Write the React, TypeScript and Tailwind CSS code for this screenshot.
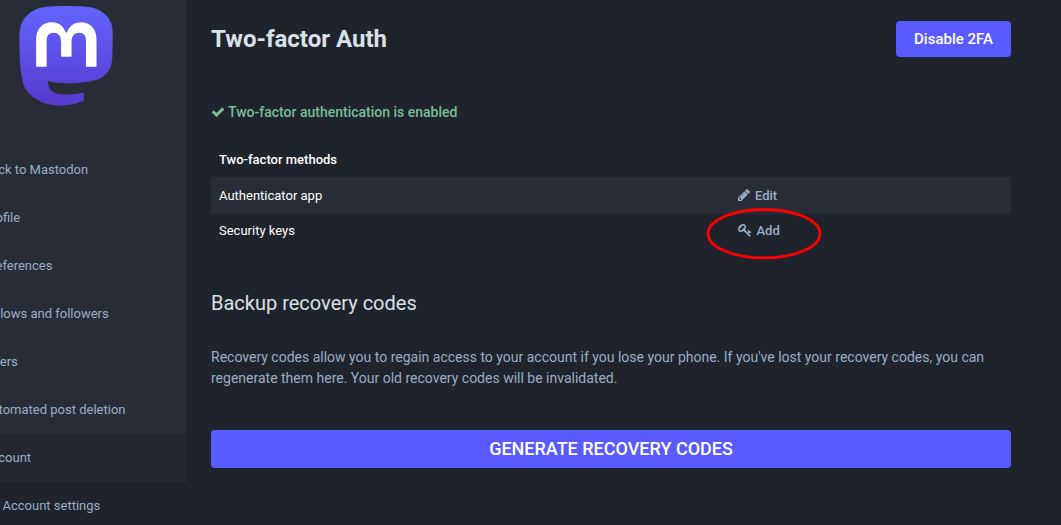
import React from "react";

type NavItem = { label: string; shift: string; row?: string };

const navItems: NavItem[] = [
  { label: "Back to Mastodon", shift: "-ml-[17px]" },
  { label: "Profile", shift: "-ml-[17px]" },
  { label: "Preferences", shift: "-ml-[17px]" },
  { label: "Follows and followers", shift: "-ml-[17.5px]" },
  { label: "Filters", shift: "-ml-[18px]" },
  { label: "Automated post deletion", shift: "-ml-[17px]" },
  { label: "Account", shift: "-ml-[17px]", row: "bg-[#242731]" },
  { label: "Account settings", shift: "ml-[2.5px]", row: "bg-[#1f232b]" },
];

function Logo() {
  return (
    <svg className="ml-[14px] mt-[6px] h-[105px] w-[104px] shrink-0" viewBox="0 0 79 79" preserveAspectRatio="none">
      <defs>
        <linearGradient id="logo" x1="0" y1="0" x2="0" y2="1">
          <stop stopColor="#6364ff" />
          <stop offset="1" stopColor="#563acc" />
        </linearGradient>
      </defs>
      <path
        fill="url(#logo)"
        d="M74.7 16.6c.6 6 .1 15.7.1 17.3 0 .5-.1 4.8-.1 5.3-.7 11.5-8 16-15.6 17.5-.1 0-.2 0-.3 0-4.9 1-10 1.2-14.9 1.4-1.2 0-2.4 0-3.6 0-4.8 0-9.7-.6-14.4-1.7 0 0-.3-.1-.3.1.1 1.6.4 3.1 1 4.5.6 1.7 2.9 5.7 11.4 5.7 5 0 9.9-.6 14.8-1.7.2 0 .3.1.3.2v5.6c0 .1 0 .2-.1.2-1.6 1.1-3.7 1.7-5.6 2.3-.8.3-1.6.5-2.4.7-7.5 1.7-15.4 1.3-22.7-1.2-6.8-2.4-13.8-8.2-15.5-15.2-.9-3.8-1.6-7.6-1.9-11.5-.6-5.8-.6-11.7-.8-17.5C3.9 24.5 4 20 4.9 16 6.7 7.9 14.1 2.2 22.3 1c1.4-.2 4.1-1 16.5-1h.1C51.4 0 56.7.8 58.1 1c8.4 1.2 15.5 7.5 16.6 15.6Z"
      />
      <path
        fill="#fff"
        transform="translate(-0.3 0.4)"
        d="M63 45.3v-20c0-4.1-1-7.3-3.2-9.7-2.1-2.4-5-3.7-8.5-3.7-4.1 0-7.2 1.6-9.3 4.7l-2 3.3-2-3.3c-2-3.1-5.1-4.7-9.2-4.7-3.5 0-6.4 1.3-8.6 3.7-2.1 2.4-3.1 5.6-3.1 9.7v20h8V25.9c0-4.1 1.7-6.2 5.2-6.2 3.8 0 5.8 2.5 5.8 7.4V37.7H44V27.1c0-4.9 1.9-7.4 5.8-7.4 3.5 0 5.2 2.1 5.2 6.2V45.3h8Z"
      />
    </svg>
  );
}

function Glyph({ d, className }: { d: string; className: string }) {
  return (
    <svg className={`shrink-0 ${className}`} viewBox="0 0 1792 1792" fill="currentColor">
      <path d={d} />
    </svg>
  );
}

const CHECK =
  "M1671 566q0 40-28 68l-724 724-136 136q-28 28-68 28t-68-28l-136-136-362-362q-28-28-28-68t28-68l136-136q28-28 68-28t68 28l294 295 656-657q28-28 68-28t68 28l136 136q28 28 28 68z";
const PENCIL =
  "M491 1536l91-91-235-235-91 91v107h128v128h107zm523-928q0-22-22-22-10 0-17 7l-542 542q-7 7-7 17 0 22 22 22 10 0 17-7l542-542q7-7 7-17zm-54-192l416 416-832 832h-416v-416zm683 96q0 53-37 90l-166 166-416-416 166-165q36-38 90-38 53 0 91 38l235 234q37 39 37 91z";
const KEY =
  "M832 512q0-80-56-136t-136-56-136 56-56 136q0 42 19 83-41-19-83-19-80 0-136 56t-56 136 56 136 136 56 136-56 56-136q0-42-19-83 41 19 83 19 80 0 136-56t56-136zm851 704q0 17-49 66t-66 49q-9 0-28.5-16t-36.5-33-38.5-40-24.5-26l-96 96 220 220q28 28 28 68 0 42-39 81t-81 39q-40 0-68-28l-671-671q-176 131-365 131-163 0-265.5-102.5t-102.5-265.5q0-160 95-313t248-248 313-95q163 0 265.5 102.5t102.5 265.5q0 189-131 365l355 355 96-96q-3-3-26-24.5t-40-38.5-33-36.5-16-28.5q0-17 49-66t66-49q13 0 23 10 6 6 46 44.5t82 79.5 86.5 86 73 78 28.5 41z";

export default function App() {
  return (
    <div className="flex h-[525px] w-[1061px] overflow-hidden bg-[#1f232b] font-[Roboto,sans-serif] text-[13px] leading-[18px] text-white">
      <aside className="flex w-[186px] shrink-0 flex-col overflow-hidden bg-[#282c37]">
        <Logo />
        <nav className="mt-[35px] flex flex-col text-[#9baec8]">
          {navItems.map((item) => (
            <a key={item.label} className={`flex h-12 shrink-0 items-center whitespace-nowrap ${item.row ?? ""}`}>
              <span className={item.shift}>{item.label}</span>
            </a>
          ))}
        </nav>
      </aside>

      <main className="flex w-[825px] flex-col pl-[25px]">
        <header className="mt-[21px] flex h-9 items-center justify-between">
          <h1 className="text-2xl font-bold text-[#d9e1e8]">Two-factor Auth</h1>
          <button className="h-9 w-[115px] rounded-[4px] bg-[#595aff] text-[15px] font-medium">Disable 2FA</button>
        </header>

        <p className="mt-[45px] flex h-5 items-center gap-[3px] text-sm font-medium text-[#79bd9a]">
          <Glyph d={CHECK} className="h-[14px] w-[14px]" />
          Two-factor authentication is enabled
        </p>

        <section className="mt-5 flex flex-col">
          <div className="flex h-[35px] items-center px-2 font-medium">Two-factor methods</div>
          <div className="flex h-[37px] items-center bg-[#282c37] px-2">
            <span className="w-[518px]">Authenticator app</span>
            <a className="flex items-center gap-1 font-medium text-[#9baec8]">
              <Glyph d={PENCIL} className="mb-px h-[14px] w-[14px]" />
              Edit
            </a>
          </div>
          <div className="flex h-[33px] items-center px-2">
            <span className="w-[519px]">Security keys</span>
            <a className="relative flex items-center gap-[4.5px] font-medium text-[#9baec8]">
              <Glyph d={KEY} className="mb-px h-[14px] w-[14px]" />
              Add
              <svg className="absolute -left-8 -top-[14px] h-[52px] w-[116px] max-w-none" viewBox="0 0 116 52" fill="none">
                <ellipse cx="58" cy="25.7" rx="56" ry="24.2" stroke="#f00" strokeWidth="2.8" />
              </svg>
            </a>
          </div>
        </section>

        <h2 className="mt-[42px] text-xl leading-7 text-[#d9e1e8]">Backup recovery codes</h2>
        <p className="mt-[30px] w-[800px] text-sm leading-[21px] text-[#9baec8]">
          Recovery codes allow you to regain access to your account if you lose your phone. If you've lost your recovery
          codes, you can regenerate them here. Your old recovery codes will be invalidated.
        </p>
        <button className="mt-[41px] h-[38px] w-[800px] rounded-[4px] bg-[#595aff] text-lg font-medium uppercase">
          Generate recovery codes
        </button>
      </main>
    </div>
  );
}
